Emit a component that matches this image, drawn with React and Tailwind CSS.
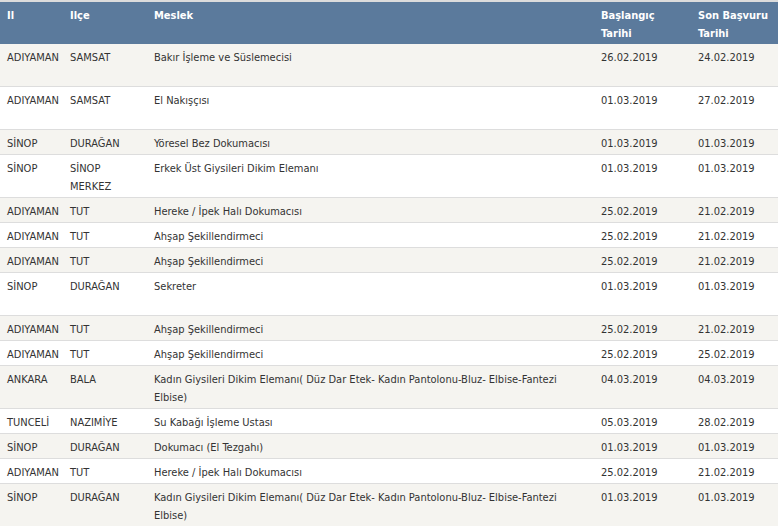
const rows = [
  ["ADIYAMAN", "SAMSAT", "Bakır İşleme ve Süslemecisi", "26.02.2019", "24.02.2019", true],
  ["ADIYAMAN", "SAMSAT", "El Nakışçısı", "01.03.2019", "27.02.2019", true],
  ["SİNOP", "DURAĞAN", "Yöresel Bez Dokumacısı", "01.03.2019", "01.03.2019"],
  ["SİNOP", "SİNOP MERKEZ", "Erkek Üst Giysileri Dikim Elemanı", "01.03.2019", "01.03.2019"],
  ["ADIYAMAN", "TUT", "Hereke / İpek Halı Dokumacısı", "25.02.2019", "21.02.2019"],
  ["ADIYAMAN", "TUT", "Ahşap Şekillendirmeci", "25.02.2019", "21.02.2019"],
  ["ADIYAMAN", "TUT", "Ahşap Şekillendirmeci", "25.02.2019", "21.02.2019"],
  ["SİNOP", "DURAĞAN", "Sekreter", "01.03.2019", "01.03.2019", true],
  ["ADIYAMAN", "TUT", "Ahşap Şekillendirmeci", "25.02.2019", "21.02.2019"],
  ["ADIYAMAN", "TUT", "Ahşap Şekillendirmeci", "25.02.2019", "25.02.2019"],
  ["ANKARA", "BALA", "Kadın Giysileri Dikim Elemanı( Düz Dar Etek- Kadın Pantolonu-Bluz- Elbise-Fantezi Elbise)", "04.03.2019", "04.03.2019"],
  ["TUNCELİ", "NAZIMİYE", "Su Kabağı İşleme Ustası", "05.03.2019", "28.02.2019"],
  ["SİNOP", "DURAĞAN", "Dokumacı (El Tezgahı)", "01.03.2019", "01.03.2019"],
  ["ADIYAMAN", "TUT", "Hereke / İpek Halı Dokumacısı", "25.02.2019", "21.02.2019"],
  ["SİNOP", "DURAĞAN", "Kadın Giysileri Dikim Elemanı( Düz Dar Etek- Kadın Pantolonu-Bluz- Elbise-Fantezi Elbise)", "01.03.2019", "01.03.2019"],
];

const App = () => {
  return (
    <div
      className="w-[778px] h-[526px] overflow-hidden bg-white text-[11px] leading-[18px] text-[#333]"
      style={{ fontFamily: '"DejaVu Sans Condensed", "DejaVu Sans", Verdana, sans-serif' }}
    >
      <table className="w-full table-fixed border-collapse">
        <colgroup>
          <col className="w-[63px]" />
          <col className="w-[84px]" />
          <col className="w-[447px]" />
          <col className="w-[97px]" />
          <col className="w-[87px]" />
        </colgroup>
        <thead>
          <tr className="bg-[#5b7a9c] text-white font-bold border-t-2 border-[#dcdcdc] border-b border-b-[#5b7a9c] align-top text-left">
            <th className="pl-[7px] pr-1 pt-[5px] pb-0 h-[42px]">Il</th>
            <th className="pl-[7px] pr-1 pt-[5px]">Ilçe</th>
            <th className="pl-[7px] pr-1 pt-[5px]">Meslek</th>
            <th className="pl-[7px] pr-1 pt-[5px]">Başlangıç Tarihi</th>
            <th className="pl-[7px] pr-1 pt-[5px]">Son Başvuru Tarihi</th>
          </tr>
        </thead>
        <tbody>
          {rows.map((r, i) => (
            <tr
              key={i}
              className={`align-top border-b border-[#dddddd] ${i % 2 === 0 ? "bg-[#f5f4f0]" : "bg-white"}`}
            >
              <td className={`pl-[7px] pr-1 pt-[5px] pb-[1px] ${r[5] ? "h-[43px]" : ""}`}>{r[0]}</td>
              <td className="pl-[7px] pr-1 pt-[5px] pb-[1px]">{r[1]}</td>
              <td className="pl-[7px] pr-2 pt-[5px] pb-[1px]">{r[2]}</td>
              <td className="pl-[7px] pr-1 pt-[5px] pb-[1px]">{r[3]}</td>
              <td className="pl-[7px] pr-1 pt-[5px] pb-[1px]">{r[4]}</td>
            </tr>
          ))}
        </tbody>
      </table>
    </div>
  );
};

export default App;
